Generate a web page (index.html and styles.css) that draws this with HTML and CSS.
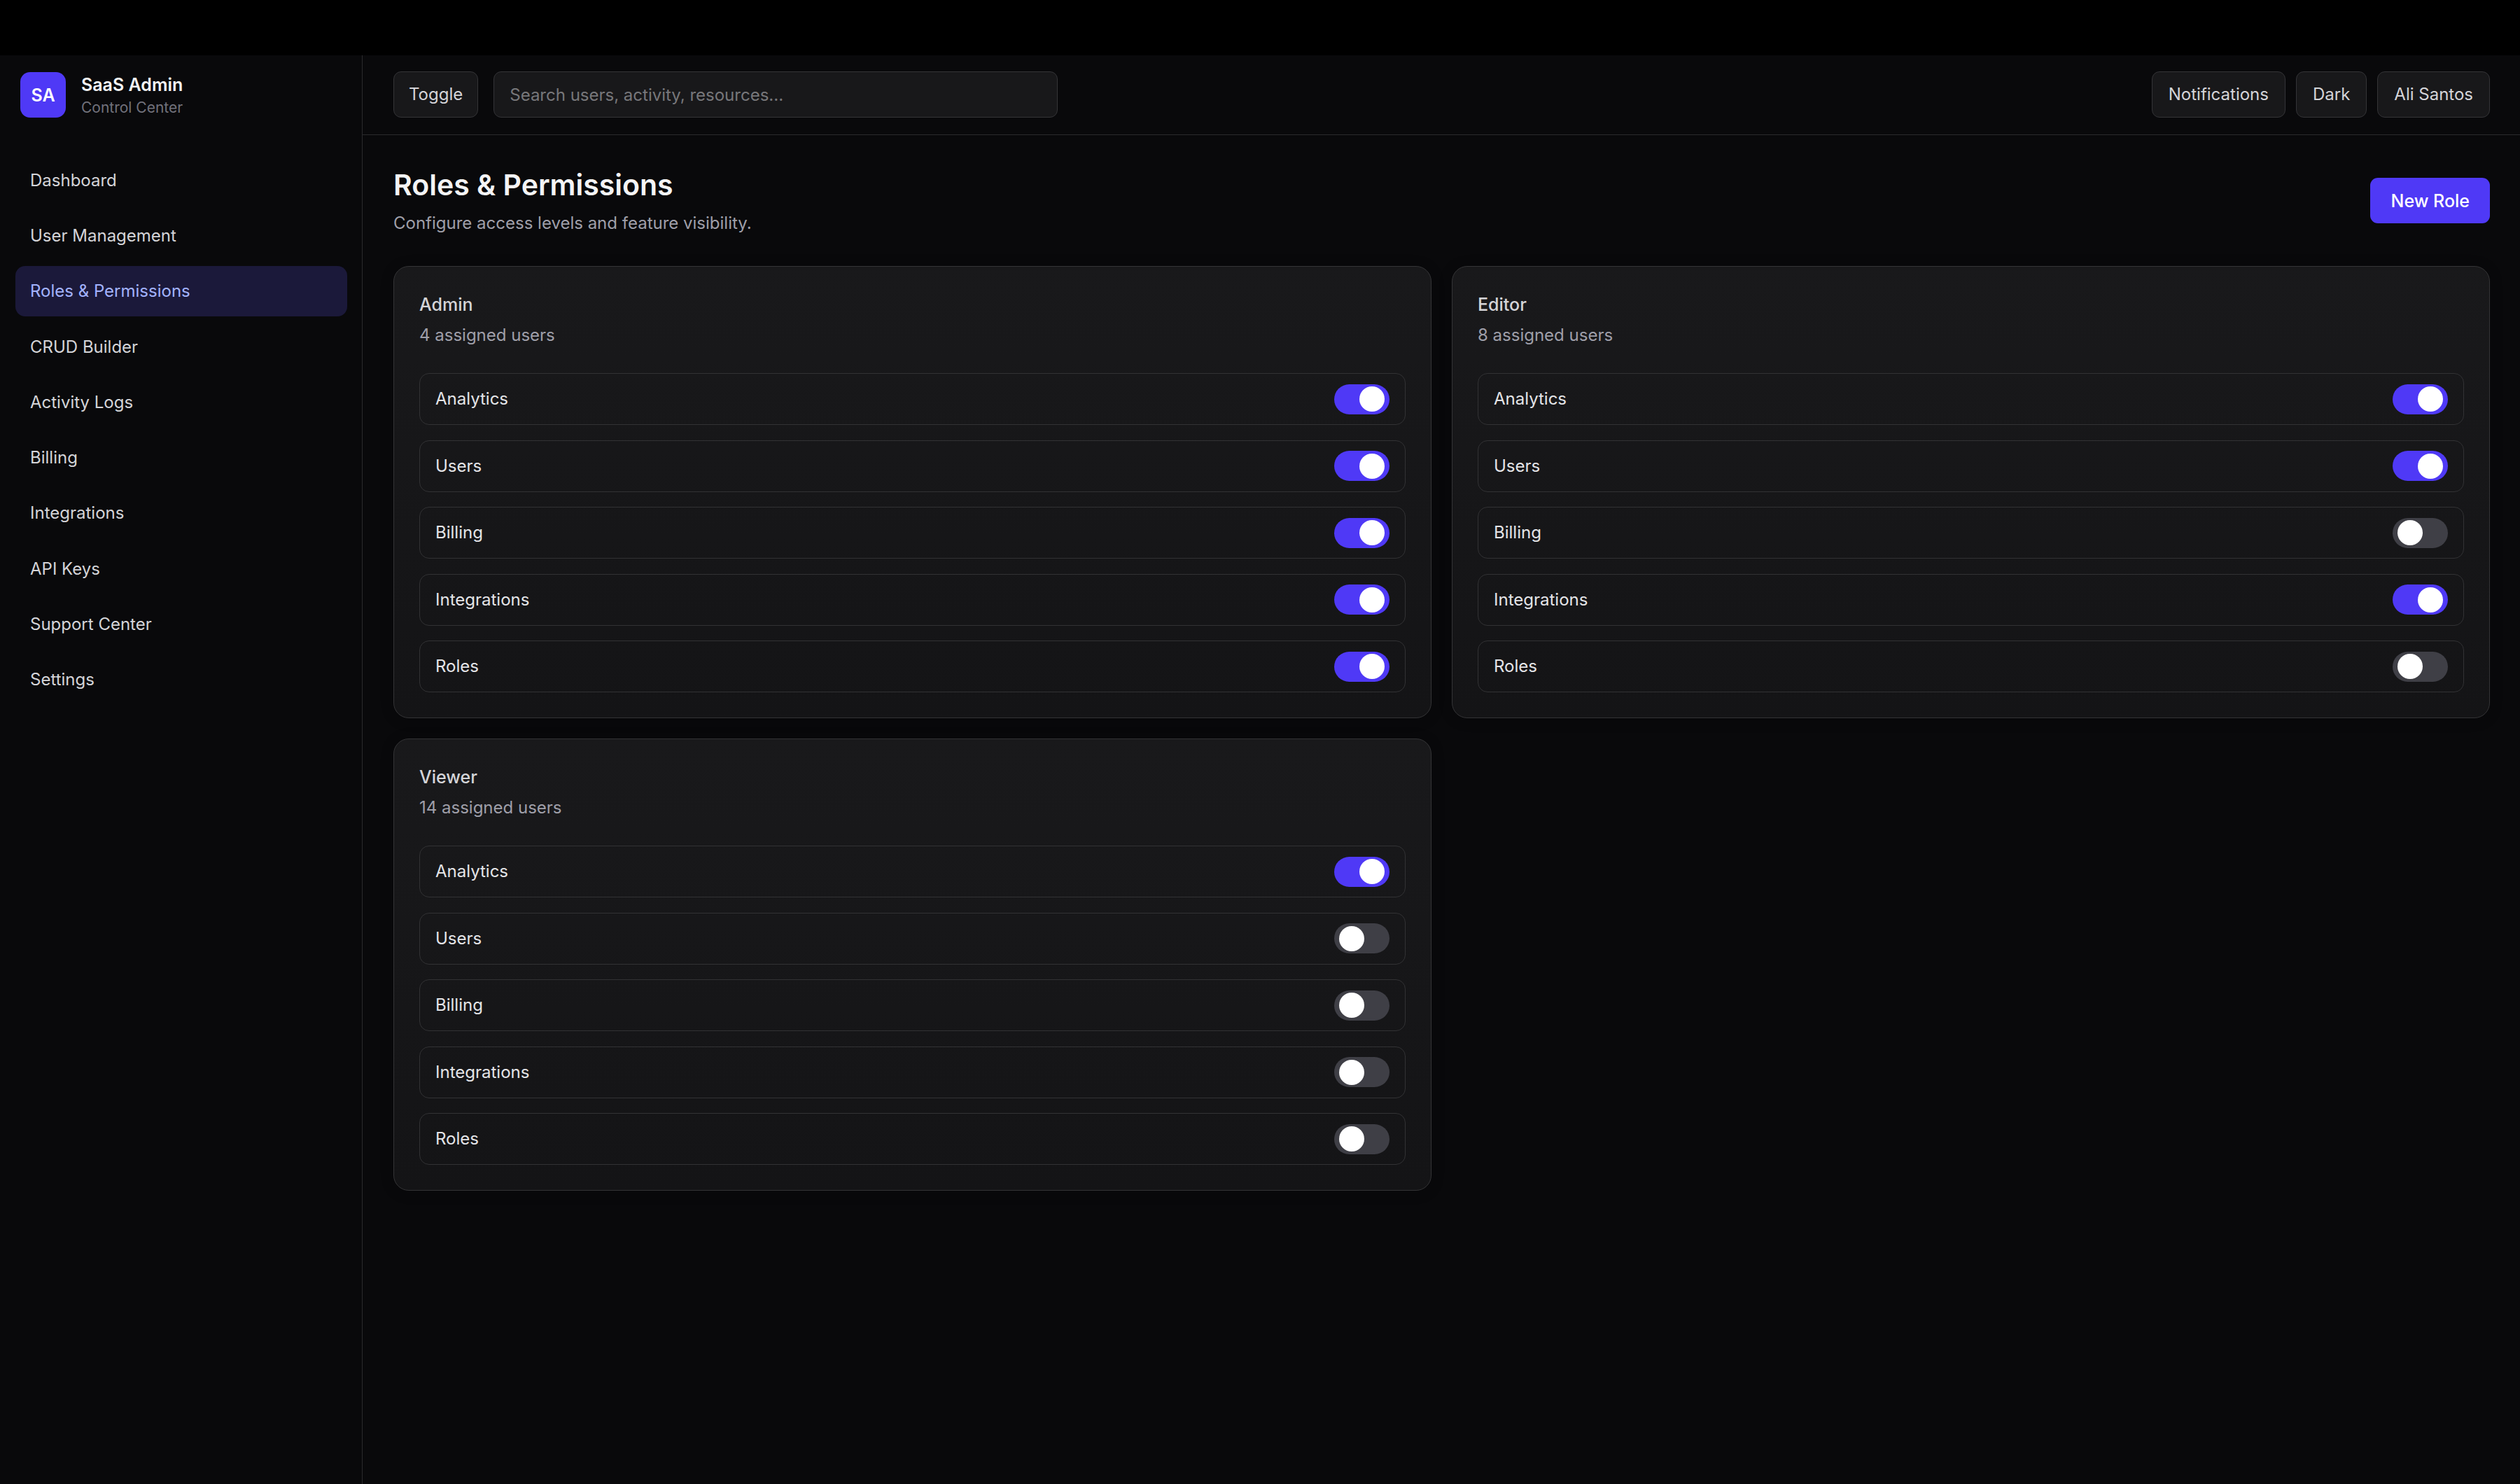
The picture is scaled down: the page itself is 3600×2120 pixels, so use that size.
FILE: index.html
```html
<!DOCTYPE html>
<html lang="en">
<head>
<meta charset="utf-8">
<meta name="viewport" content="width=device-width, initial-scale=1">
<title>SaaS Admin – Roles &amp; Permissions</title>
<link rel="stylesheet" href="styles.css">
</head>
<body>
<div class="app">
  <aside class="sidebar">
    <div class="brand">
      <div class="brand-mark">SA</div>
      <div class="brand-text">
        <div class="brand-name">SaaS Admin</div>
        <div class="brand-sub">Control Center</div>
      </div>
    </div>
    <nav class="nav" aria-label="Main">
      <a class="nav-link" href="#dashboard">Dashboard</a>
      <a class="nav-link" href="#users">User Management</a>
      <a class="nav-link nav-link-active" href="#roles" aria-current="page">Roles &amp; Permissions</a>
      <a class="nav-link" href="#crud">CRUD Builder</a>
      <a class="nav-link" href="#activity">Activity Logs</a>
      <a class="nav-link" href="#billing">Billing</a>
      <a class="nav-link" href="#integrations">Integrations</a>
      <a class="nav-link" href="#keys">API Keys</a>
      <a class="nav-link" href="#support">Support Center</a>
      <a class="nav-link" href="#settings">Settings</a>
    </nav>
  </aside>
  <div class="content">
    <header class="topbar">
      <button class="button" type="button">Toggle</button>
      <input class="search" type="search" aria-label="Search" placeholder="Search users, activity, resources...">
      <div class="topbar-actions">
        <button class="button" type="button">Notifications</button>
        <button class="button" type="button">Dark</button>
        <button class="button" type="button">Ali Santos</button>
      </div>
    </header>
    <main class="main">
      <div class="page-head">
        <div>
          <h1 class="page-title">Roles &amp; Permissions</h1>
          <p class="page-desc">Configure access levels and feature visibility.</p>
        </div>
        <button class="button-primary" type="button">New Role</button>
      </div>
      <div class="cards">
        <section class="card">
          <h2 class="card-title">Admin</h2>
          <p class="card-desc">4 assigned users</p>
          <div class="perms">
            <label class="perm">Analytics<input class="switch" type="checkbox" role="switch" checked></label>
            <label class="perm">Users<input class="switch" type="checkbox" role="switch" checked></label>
            <label class="perm">Billing<input class="switch" type="checkbox" role="switch" checked></label>
            <label class="perm">Integrations<input class="switch" type="checkbox" role="switch" checked></label>
            <label class="perm">Roles<input class="switch" type="checkbox" role="switch" checked></label>
          </div>
        </section>
        <section class="card">
          <h2 class="card-title">Editor</h2>
          <p class="card-desc">8 assigned users</p>
          <div class="perms">
            <label class="perm">Analytics<input class="switch" type="checkbox" role="switch" checked></label>
            <label class="perm">Users<input class="switch" type="checkbox" role="switch" checked></label>
            <label class="perm">Billing<input class="switch" type="checkbox" role="switch"></label>
            <label class="perm">Integrations<input class="switch" type="checkbox" role="switch" checked></label>
            <label class="perm">Roles<input class="switch" type="checkbox" role="switch"></label>
          </div>
        </section>
        <section class="card">
          <h2 class="card-title">Viewer</h2>
          <p class="card-desc">14 assigned users</p>
          <div class="perms">
            <label class="perm">Analytics<input class="switch" type="checkbox" role="switch" checked></label>
            <label class="perm">Users<input class="switch" type="checkbox" role="switch"></label>
            <label class="perm">Billing<input class="switch" type="checkbox" role="switch"></label>
            <label class="perm">Integrations<input class="switch" type="checkbox" role="switch"></label>
            <label class="perm">Roles<input class="switch" type="checkbox" role="switch"></label>
          </div>
        </section>
      </div>
    </main>
  </div>
</div>
</body>
</html>
```
FILE: styles.css
```css
* {
  box-sizing: border-box;
}

body {
  margin: 0;
  background: #09090b;
  color: #f4f4f5;
  font-family: Inter, "Liberation Sans", sans-serif;
  font-size: 24px;
  line-height: 36px;
}

h1, h2, p {
  margin: 0;
}

button, input {
  font: inherit;
}

.app {
  display: flex;
  min-height: 100vh;
  border-top: 79px solid #000;
}

/* Sidebar */
.sidebar {
  flex: none;
  width: 518px;
  border-right: 1px solid #2a2a2d;
}

.brand {
  display: flex;
  align-items: center;
  gap: 22px;
  height: 113px;
  padding: 0 29px;
}

.brand-mark {
  display: grid;
  place-items: center;
  width: 65px;
  height: 65px;
  border-radius: 14px;
  background: #4f39f6;
  color: #fff;
  font-size: 25px;
  font-weight: 600;
}

.brand-name {
  font-size: 25px;
  font-weight: 600;
}

.brand-sub {
  color: #71717b;
  font-size: 21px;
  line-height: 29px;
}

.nav {
  display: grid;
  align-content: space-between;
  min-height: 815px;
  padding: 30px 21px 0 22px;
}

.nav-link {
  padding: 18px 21px;
  border-radius: 14px;
  color: #d4d4d8;
  text-decoration: none;
}

.nav-link-active {
  background: #1b193a;
  color: #a3b3ff;
}

/* Top bar */
.content {
  flex: 1;
  min-width: 0;
}

.topbar {
  display: flex;
  align-items: flex-start;
  gap: 22px;
  height: 114px;
  padding: 23px 43px 0 44px;
  border-bottom: 1px solid #2a2a2d;
}

.button {
  height: 66px;
  padding: 0 21px;
  border: 1px solid #343437;
  border-radius: 11px;
  background: #18181a;
  color: #d4d4d8;
}

.search {
  width: 806px;
  height: 66px;
  padding: 0 22px;
  border: 1px solid #343437;
  border-radius: 11px;
  background: #18181a;
  color: #f4f4f5;
}

.search::placeholder {
  color: #77777a;
  opacity: 1;
}

.topbar-actions {
  display: flex;
  gap: 15px;
  margin-left: auto;
}

.topbar-actions .button {
  padding: 0 23px;
}

/* Page */
.main {
  padding: 43px 43px 43px 44px;
}

.page-head {
  display: flex;
  align-items: center;
  justify-content: space-between;
  margin-bottom: 43px;
}

.page-title {
  font-size: 41px;
  font-weight: 600;
  line-height: 56px;
}

.page-desc {
  margin-top: 9px;
  color: #9f9fa9;
}

.button-primary {
  height: 65px;
  padding: 0 29px;
  border: 0;
  border-radius: 11px;
  background: #4f39f6;
  color: #fff;
  font-size: 25px;
  font-weight: 500;
}

.cards {
  display: grid;
  grid-template-columns: 1fr 1fr;
  gap: 29px;
}

.card {
  padding: 36px;
  border: 1px solid #343436;
  border-radius: 22px;
  background: linear-gradient(#19191b, #141416);
  box-shadow: 0 2px 20px rgba(0, 0, 0, 0.15);
}

.card-title {
  color: #d4d4d8;
  font-size: 25px;
  font-weight: 500;
}

.card-desc {
  margin-top: 8px;
  margin-bottom: 36px;
  color: #9f9fa9;
}

.perms {
  display: grid;
  align-content: space-between;
  min-height: 456px;
}

.perm {
  display: flex;
  align-items: center;
  justify-content: space-between;
  height: 74px;
  padding: 0 22px;
  border: 1px solid #323234;
  border-radius: 14px;
  color: #e4e4e7;
}

.switch {
  display: flex;
  align-items: center;
  appearance: none;
  width: 79px;
  height: 43px;
  margin: 0;
  padding: 0 7px;
  border-radius: 22px;
  background: #3f3f46;
}

.switch::before {
  content: "";
  width: 36px;
  height: 36px;
  border-radius: 50%;
  background: #fff;
}

.switch:checked {
  justify-content: flex-end;
  background: #4f39f6;
}
```
